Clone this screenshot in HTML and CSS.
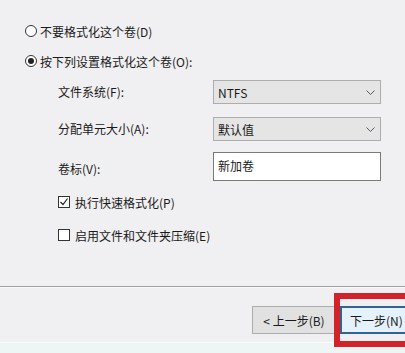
FILE: index.html
```html
<!DOCTYPE html>
<html lang="zh-CN">
<head>
  <meta charset="UTF-8">
  <meta name="viewport" content="width=device-width, initial-scale=1.0">
  <title>格式化分区</title>
  <link rel="stylesheet" href="styles.css">
</head>
<body>
  <div class="wizard">
    <div class="content">
      <div class="radio-row">
        <span class="radio"></span>
        <span>不要格式化这个卷(D)</span>
      </div>
      <div class="radio-row second">
        <span class="radio checked"></span>
        <span>按下列设置格式化这个卷(O):</span>
      </div>

      <div class="fields">
        <label>文件系统(F):</label>
        <div class="select">
          <span>NTFS</span>
          <svg class="chevron" width="9" height="5" viewBox="0 0 9 5"><polyline points="0.5,0.5 4.5,4.5 8.5,0.5" fill="none" stroke="#5a5a5a" stroke-width="1"/></svg>
        </div>

        <label>分配单元大小(A):</label>
        <div class="select">
          <span>默认值</span>
          <svg class="chevron" width="9" height="5" viewBox="0 0 9 5"><polyline points="0.5,0.5 4.5,4.5 8.5,0.5" fill="none" stroke="#5a5a5a" stroke-width="1"/></svg>
        </div>

        <label>卷标(V):</label>
        <div class="text-input">新加卷</div>
      </div>

      <div class="check-row first">
        <span class="checkbox">
          <svg width="10" height="10" viewBox="0 0 10 10"><polyline points="1.5,5 4,7.5 8.5,1.5" fill="none" stroke="#222" stroke-width="1.2"/></svg>
        </span>
        <span>执行快速格式化(P)</span>
      </div>
      <div class="check-row">
        <span class="checkbox"></span>
        <span>启用文件和文件夹压缩(E)</span>
      </div>
    </div>

    <div class="footer">
      <button type="button" class="btn">&lt; 上一步(B)</button>
      <button type="button" class="btn btn-next">下一步(N)</button>
    </div>
    <div class="bottom-strip"></div>

    <div class="highlight"></div>
  </div>
</body>
</html>
```

FILE: styles.css
```css
body {
  margin: 0;
  background: #f0eff1;
  font-family: "Noto Sans CJK SC", "Noto Sans", sans-serif;
  font-size: 12px;
  color: #1a1a1a;
  overflow: hidden;
}

.wizard {
  position: relative;
  width: 405px;
  height: 353px;
  overflow: hidden;
}

.content {
  padding-top: 21px;
  height: 286px;
  box-sizing: border-box;
}

.radio-row {
  display: flex;
  align-items: center;
  gap: 3px;
  height: 20px;
  padding-left: 25px;
}

.radio-row.second {
  margin-top: 10px;
}

.radio {
  width: 12px;
  height: 12px;
  border: 1px solid #333;
  border-radius: 50%;
  background: white;
  box-sizing: border-box;
  display: flex;
  align-items: center;
  justify-content: center;
}

.radio.checked::after {
  content: "";
  width: 6px;
  height: 6px;
  border-radius: 50%;
  background: #222;
}

.fields {
  display: grid;
  grid-template-columns: 155px 168px;
  grid-template-rows: 24px 24px 29px;
  row-gap: 13px;
  align-items: center;
  margin: 9px 0 0 58px;
}

.fields label {
  line-height: 20px;
}

.select {
  height: 24px;
  background: #e5e5e5;
  border: 1px solid #adadad;
  box-sizing: border-box;
  display: flex;
  align-items: center;
  justify-content: space-between;
  padding: 0 5px 0 4px;
}

.chevron {
  display: block;
}

.text-input {
  height: 29px;
  background: white;
  border: 1px solid #7a7a7a;
  box-sizing: border-box;
  padding: 4px 4px 0;
  margin-top: -4px;
}

.check-row {
  display: flex;
  align-items: center;
  gap: 5px;
  height: 20px;
  padding-left: 58px;
  margin-top: 13px;
}

.check-row.first {
  margin-top: 9px;
}

.checkbox {
  width: 12px;
  height: 12px;
  border: 1px solid #333;
  background: white;
  box-sizing: border-box;
  display: flex;
  align-items: center;
  justify-content: center;
}

.checkbox svg {
  display: block;
}

.footer {
  border-top: 1px solid #a0a0a0;
  box-shadow: inset 0 1px 0 #f8f8f8;
  height: 56px;
  box-sizing: border-box;
  display: flex;
  gap: 4px;
  padding: 19px 0 0 252px;
}

.btn {
  height: 28px;
  width: 84px;
  flex-shrink: 0;
  border: 1px solid #adadad;
  background: #e1e1e1;
  font-family: inherit;
  font-size: 12px;
  color: #1a1a1a;
  padding: 0;
  text-align: center;
}

.btn-next {
  border: 2px solid #2f6590;
  background: #e5f1fb;
  text-align: left;
  padding-left: 8px;
}

.bottom-strip {
  height: 11px;
  border-top: 1px solid #fbfbfb;
  background: #eef6f5;
}

.highlight {
  position: absolute;
  left: 334px;
  top: 293px;
  width: 90px;
  height: 54px;
  border: 6px solid #d2232a;
  box-sizing: border-box;
}
```
